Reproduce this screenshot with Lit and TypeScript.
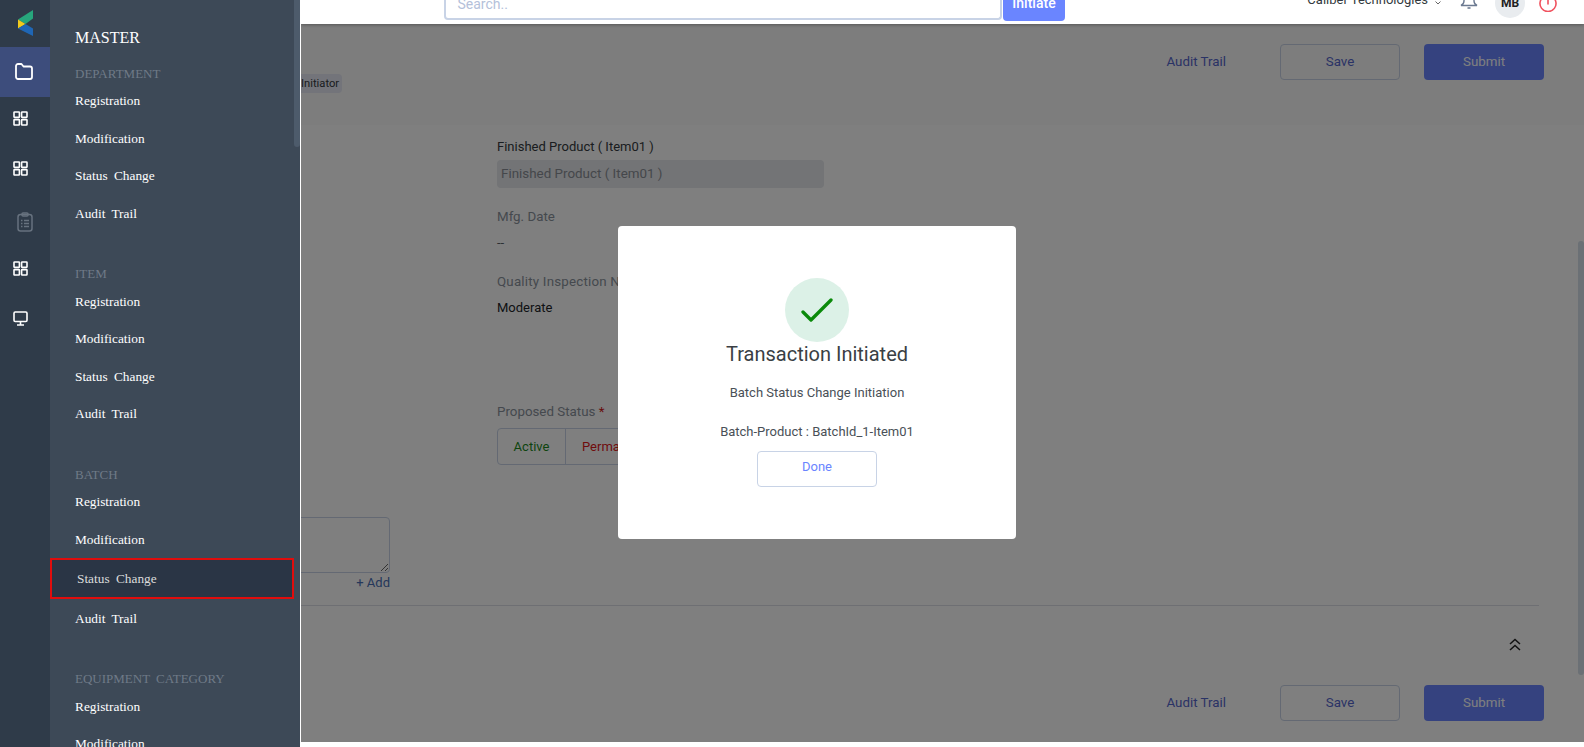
import { LitElement, html, css, svg } from 'lit';
import { customElement } from 'lit/decorators.js';

const sections = [
  { title: 'DEPARTMENT', items: ['Registration', 'Modification', 'Status Change', 'Audit Trail'] },
  { title: 'ITEM', items: ['Registration', 'Modification', 'Status Change', 'Audit Trail'] },
  { title: 'BATCH', items: ['Registration', 'Modification', 'Status Change', 'Audit Trail'], active: 'Status Change' },
  { title: 'EQUIPMENT CATEGORY', items: ['Registration', 'Modification'] },
];

const gridIcon = svg`<svg width="15" height="15" viewBox="0 0 15 15" fill="none" stroke="#fff" stroke-width="1.6">
  <rect x="1" y="1" width="5.4" height="5.4" rx=".6" /><rect x="8.6" y="1" width="5.4" height="5.4" rx=".6" />
  <rect x="1" y="8.6" width="5.4" height="5.4" rx=".6" /><rect x="8.6" y="8.6" width="5.4" height="5.4" rx=".6" />
</svg>`;

@customElement('app-root')
export class AppRoot extends LitElement {
  static styles = css`
    :host {
      display: block;
      position: relative;
      width: 1584px;
      height: 747px;
      overflow: hidden;
      background: #fff;
      font-family: Roboto, sans-serif;
      font-size: 13px;
      color: #343a40;
    }

    .shell {
      display: flex;
      height: 747px;
    }

    /* icon rail */
    .rail {
      width: 50px;
      flex: none;
      background: #2f3b49;
      position: relative;
      z-index: 3;
    }
    .logo {
      height: 47px;
      padding: 10px 0 0 18px;
      box-sizing: border-box;
    }
    .logo svg,
    .tile svg,
    .rail-row svg {
      display: block;
    }
    .tile {
      height: 50px;
      background: #3d4d7c;
      display: flex;
      align-items: center;
      padding: 0 0 2px 15px;
      box-sizing: border-box;
    }
    .rail-list {
      margin-top: -4px;
    }
    .rail-row {
      height: 50px;
      display: flex;
      align-items: center;
      padding-left: 13px;
      box-sizing: border-box;
    }
    .rail-row.clip {
      padding: 8px 0 0 17px;
    }

    /* drawer */
    .panel {
      width: 251px;
      flex: none;
      box-sizing: border-box;
      background: #3d4957;
      border-right: 1px solid #fff;
      position: relative;
      z-index: 3;
      overflow: hidden;
      font-family: 'Liberation Serif', serif;
      color: #fff;
      word-spacing: 3px;
    }
    .thumb {
      position: absolute;
      top: 0;
      right: 0;
      width: 6px;
      height: 147px;
      border-radius: 0 0 3px 3px;
      background: #4d5b6b;
    }
    .panel h1 {
      margin: 0;
      height: 64.5px;
      padding: 28px 0 0 25px;
      box-sizing: border-box;
      font-size: 16px;
      line-height: 20px;
      font-weight: 400;
    }
    .section {
      margin-bottom: 32.5px;
    }
    .section h2 {
      margin: 0;
      height: 18px;
      line-height: 18px;
      padding-left: 25px;
      font-size: 13px;
      font-weight: 400;
      color: #6f7a87;
    }
    .link {
      height: 37.5px;
      width: 244px;
      box-sizing: border-box;
      display: flex;
      align-items: center;
      padding-left: 25px;
      font-size: 13.33px;
    }
    .link.active {
      height: 41px;
      margin: -1px 0 1.5px;
      padding-top: 1px;
      border: 2px solid #e00d0d;
      background: #2a3545;
      color: #dcdcdc;
    }

    /* page behind the overlay */
    .main {
      flex: 1;
      min-width: 0;
      position: relative;
      display: flex;
      flex-direction: column;
    }
    .header {
      height: 24px;
      flex: none;
      display: flex;
      align-items: flex-end;
      background: #fff;
      padding: 0 27px 4px 142.5px;
      box-sizing: border-box;
      position: relative;
      z-index: 2;
      box-shadow: 0 1px 3px rgba(0, 0, 0, 0.3);
    }
    .search {
      width: 558.5px;
      height: 38px;
      flex: none;
      box-sizing: border-box;
      border: 2px solid #c8d3e6;
      border-top: 0;
      border-radius: 4px;
      padding: 0 0 6px 12px;
      display: flex;
      align-items: flex-end;
      font-size: 14px;
      color: #b4c1da;
    }
    .go {
      margin: 0 0 -1px 1px;
      width: 62px;
      height: 38px;
      flex: none;
      box-sizing: border-box;
      border-radius: 4px;
      background: #6a85ff;
      color: #fff;
      font-size: 14px;
      font-weight: 500;
      display: flex;
      align-items: flex-end;
      justify-content: center;
      padding-bottom: 10px;
    }
    .org {
      margin: 0 0 10px auto;
      line-height: 20px;
      white-space: nowrap;
    }
    .caret {
      margin: 0 0 15px 7px;
      flex: none;
    }
    .bell {
      margin: 0 0 9px 19px;
      flex: none;
    }
    .avatar {
      margin: 0 0 2px 17px;
      width: 30px;
      height: 30px;
      flex: none;
      border-radius: 50%;
      background: #e9ecef;
      color: #222;
      font-size: 12px;
      font-weight: 700;
      display: flex;
      align-items: center;
      justify-content: center;
    }
    .power {
      margin: 0 0 8px 14px;
      flex: none;
    }

    .band {
      height: 101px;
      flex: none;
      box-sizing: border-box;
      background: #fafafa;
      padding: 20px 40px 0 0;
      display: flex;
      justify-content: space-between;
      align-items: flex-start;
    }
    .chip {
      margin-top: 30px;
      height: 19px;
      line-height: 19px;
      padding: 0 3px 0 0;
      border-radius: 0 4px 4px 0;
      background: #e6e8f4;
      font-size: 11.2px;
    }
    .actions {
      display: flex;
      align-items: center;
      font-size: 13.33px;
      color: #5566cc;
    }
    .actions .trail {
      margin: -2px 54px 0 0;
    }
    .btn {
      width: 120px;
      height: 36px;
      padding-bottom: 2px;
      box-sizing: border-box;
      border: 1px solid #c8d3e6;
      border-radius: 4px;
      display: flex;
      align-items: center;
      justify-content: center;
    }
    .btn.primary {
      margin-left: 24px;
      border: 0;
      background: #6a85ff;
      color: #fff;
    }

    .form {
      height: 480px;
      flex: none;
      display: flex;
    }
    .notes {
      width: 89px;
      flex: none;
      padding-top: 392px;
    }
    .notes textarea {
      display: block;
      width: 99px;
      height: 56px;
      margin: 0 0 0 -10px;
      box-sizing: border-box;
      border: 1px solid #c8d3e6;
      border-radius: 4px;
      background: #fff;
      outline: none;
    }
    .add {
      margin-top: 1px;
      line-height: 18px;
      text-align: right;
      color: #4a6fb5;
    }
    .fields {
      margin-left: 107px;
      padding-top: 13px;
      width: 500px;
    }
    .label,
    .value {
      line-height: 18px;
    }
    .label {
      font-size: 13.33px;
      color: #8a929c;
    }
    .label.top {
      font-size: 13px;
      color: #343a40;
    }
    .label.wide {
      letter-spacing: 0.2px;
    }
    .readonly {
      width: 327px;
      height: 28px;
      margin: 4px 0 19.5px;
      padding: 0 0 2px 4px;
      box-sizing: border-box;
      border-radius: 4px;
      background: #e6e8ec;
      color: #8a8f96;
      font-size: 13.4px;
      display: flex;
      align-items: center;
    }
    .value {
      margin: 8.5px 0 20.5px;
      color: #5a6268;
    }
    .value.dark {
      margin: 8px 0 86.5px;
      color: #212529;
    }
    .req {
      color: #d01818;
    }
    .segments {
      margin-top: 7px;
      height: 37px;
      width: 300px;
      box-sizing: border-box;
      border: 1px solid #c8d3e6;
      border-radius: 4px;
      display: flex;
    }
    .segments span {
      display: flex;
      align-items: center;
    }
    .seg-on {
      width: 67px;
      justify-content: center;
      color: #1c8a1c;
      border-right: 1px solid #c8d3e6;
    }
    .seg-off {
      flex: 1;
      padding-left: 16px;
      color: #e01818;
    }

    .rule {
      margin-right: 45px;
      height: 1px;
      flex: none;
      background: #dcdfe6;
    }
    .chevrons {
      margin-top: 32px;
      padding-right: 62px;
      height: 13px;
      flex: none;
      display: flex;
      justify-content: flex-end;
    }
    .foot {
      margin-top: 34px;
      padding-right: 40px;
      flex: none;
      justify-content: flex-end;
    }

    .page-thumb {
      position: absolute;
      top: 241px;
      right: 0;
      width: 6px;
      height: 434px;
      border-radius: 3px;
      background: #d6e0ea;
    }
    .backdrop {
      position: absolute;
      inset: 24px 0 5.5px 0;
      background: rgba(0, 0, 0, 0.5);
    }

    /* success dialog */
    .modal {
      position: absolute;
      left: 618px;
      top: 226px;
      width: 398px;
      height: 313px;
      box-sizing: border-box;
      padding-top: 52px;
      border-radius: 4px;
      background: #fff;
      z-index: 4;
      display: flex;
      flex-direction: column;
      align-items: center;
    }
    .tick {
      width: 64px;
      height: 64px;
      flex: none;
      border-radius: 50%;
      background: #dcf1e7;
      display: flex;
      align-items: center;
      justify-content: center;
    }
    .modal h3 {
      margin: -1px 0 0;
      font-size: 20px;
      line-height: 26px;
      font-weight: 400;
      color: #3a3f44;
    }
    .modal p {
      margin: 0;
      line-height: 18px;
      color: #495057;
    }
    .modal .sub {
      margin-top: 17px;
    }
    .modal .ref {
      margin-top: 21px;
    }
    .done {
      margin-top: 10px;
      width: 120px;
      height: 36px;
      box-sizing: border-box;
      padding-bottom: 6px;
      border: 1px solid #c8d3e6;
      border-radius: 4px;
      color: #6a85ff;
      display: flex;
      align-items: center;
      justify-content: center;
    }
  `;

  render() {
    return html`
      <div class="shell">
        ${this.renderRail()} ${this.renderPanel()}
        <div class="main">
          ${this.renderHeader()}
          <div class="band">
            <span class="chip">Initiator</span>
            ${this.renderActions('')}
          </div>
          ${this.renderForm()}
          <div class="rule"></div>
          <div class="chevrons">
            <svg width="14" height="13" viewBox="0 0 14 13" fill="none" stroke="#222" stroke-width="1.5">
              <path d="M2 6 7 1.5 12 6M2 12 7 7.5 12 12" />
            </svg>
          </div>
          ${this.renderActions('foot')}
          <div class="page-thumb"></div>
          <div class="backdrop"></div>
        </div>
      </div>
      <div class="modal">
        <div class="tick">
          <svg width="32" height="26" viewBox="0 0 32 26" fill="none" stroke="#0a8a0a" stroke-width="3.3" stroke-linecap="round" stroke-linejoin="round">
            <path d="M2 15 10 23 30 3" />
          </svg>
        </div>
        <h3>Transaction Initiated</h3>
        <p class="sub">Batch Status Change Initiation</p>
        <p class="ref">Batch-Product : BatchId_1-Item01</p>
        <div class="done">Done</div>
      </div>
    `;
  }

  renderRail() {
    return html`
      <div class="rail">
        <div class="logo">
          <svg width="15" height="26" viewBox="0 0 15 26">
            <path fill="#27a67c" d="M0 9.5 15 0v8.5L7.5 14z" />
            <path fill="#f2cb1d" d="M0 9.5 7.5 14 0 18.5z" />
            <path fill="#1f66b5" d="M0 18.5 7.5 14 15 18.5V26z" />
          </svg>
        </div>
        <div class="tile">
          <svg width="18" height="17" viewBox="0 0 18 17" fill="none" stroke="#fff" stroke-width="1.8" stroke-linejoin="round">
            <path d="M1 3a2 2 0 0 1 2-2h3.5l2 2.5H15a2 2 0 0 1 2 2V14a2 2 0 0 1-2 2H3a2 2 0 0 1-2-2z" />
          </svg>
        </div>
        <div class="rail-list">
          <div class="rail-row">${gridIcon}</div>
          <div class="rail-row">${gridIcon}</div>
          <div class="rail-row clip">
            <svg width="16" height="20" viewBox="0 0 16 20" fill="none" stroke="#67727f" stroke-width="1.5">
              <rect x="1" y="2.5" width="14" height="16.5" rx="2.5" />
              <rect x="5" y="1" width="6" height="3" rx="1" />
              <path d="M4 8.5h1.5M7 8.5h5M4 11.5h1.5M7 11.5h5M4 14.5h1.5M7 14.5h5" />
            </svg>
          </div>
          <div class="rail-row">${gridIcon}</div>
          <div class="rail-row">
            <svg width="15" height="15" viewBox="0 0 15 15" fill="none" stroke="#fff" stroke-width="1.6">
              <rect x="1" y="1" width="13" height="9.5" rx="1.2" />
              <path d="M7.5 11v2.5M4 14h7" />
            </svg>
          </div>
        </div>
      </div>
    `;
  }

  renderPanel() {
    return html`
      <div class="panel">
        <div class="thumb"></div>
        <h1>MASTER</h1>
        ${sections.map(
          (s) => html`
            <div class="section">
              <h2>${s.title}</h2>
              ${s.items.map(
                (i) => html`<div class="link ${s.active === i ? 'active' : ''}">${i}</div>`,
              )}
            </div>
          `,
        )}
      </div>
    `;
  }

  renderHeader() {
    return html`
      <div class="header">
        <div class="search">Search..</div>
        <div class="go">Initiate</div>
        <span class="org">Caliber Technologies</span>
        <svg class="caret" width="6" height="4" viewBox="0 0 6 4" fill="none" stroke="#666" stroke-width="1"><path d="M.5.5 3 3 5.5.5" /></svg>
        <svg class="bell" width="18" height="24" viewBox="0 0 18 24" fill="none" stroke="#6c7a91" stroke-width="1.4">
          <path d="M4 0v14q0 3-3 4.500h16q-3-1.500-3-4.500V0" />
          <path d="M7.500 21h3" stroke-width="1.6" />
        </svg>
        <div class="avatar">MB</div>
        <svg class="power" width="18" height="24" viewBox="0 0 18 24" fill="none" stroke="#f0525f" stroke-width="1.6" stroke-linecap="round">
          <path d="M6 8.100a8 8 0 1 0 6 0M9 5v11" />
        </svg>
      </div>
    `;
  }

  renderActions(extra: string) {
    return html`
      <div class="actions ${extra}">
        <span class="trail">Audit Trail</span>
        <div class="btn">Save</div>
        <div class="btn primary">Submit</div>
      </div>
    `;
  }

  renderForm() {
    return html`
      <div class="form">
        <div class="notes">
          <textarea></textarea>
          <div class="add">+ Add</div>
        </div>
        <div class="fields">
          <div class="label top">Finished Product ( Item01 )</div>
          <div class="readonly">Finished Product ( Item01 )</div>
          <div class="label">Mfg. Date</div>
          <div class="value">--</div>
          <div class="label wide">Quality Inspection Needed</div>
          <div class="value dark">Moderate</div>
          <div class="label">Proposed Status <span class="req">*</span></div>
          <div class="segments">
            <span class="seg-on">Active</span>
            <span class="seg-off">Permanently Inactive</span>
          </div>
        </div>
      </div>
    `;
  }
}
